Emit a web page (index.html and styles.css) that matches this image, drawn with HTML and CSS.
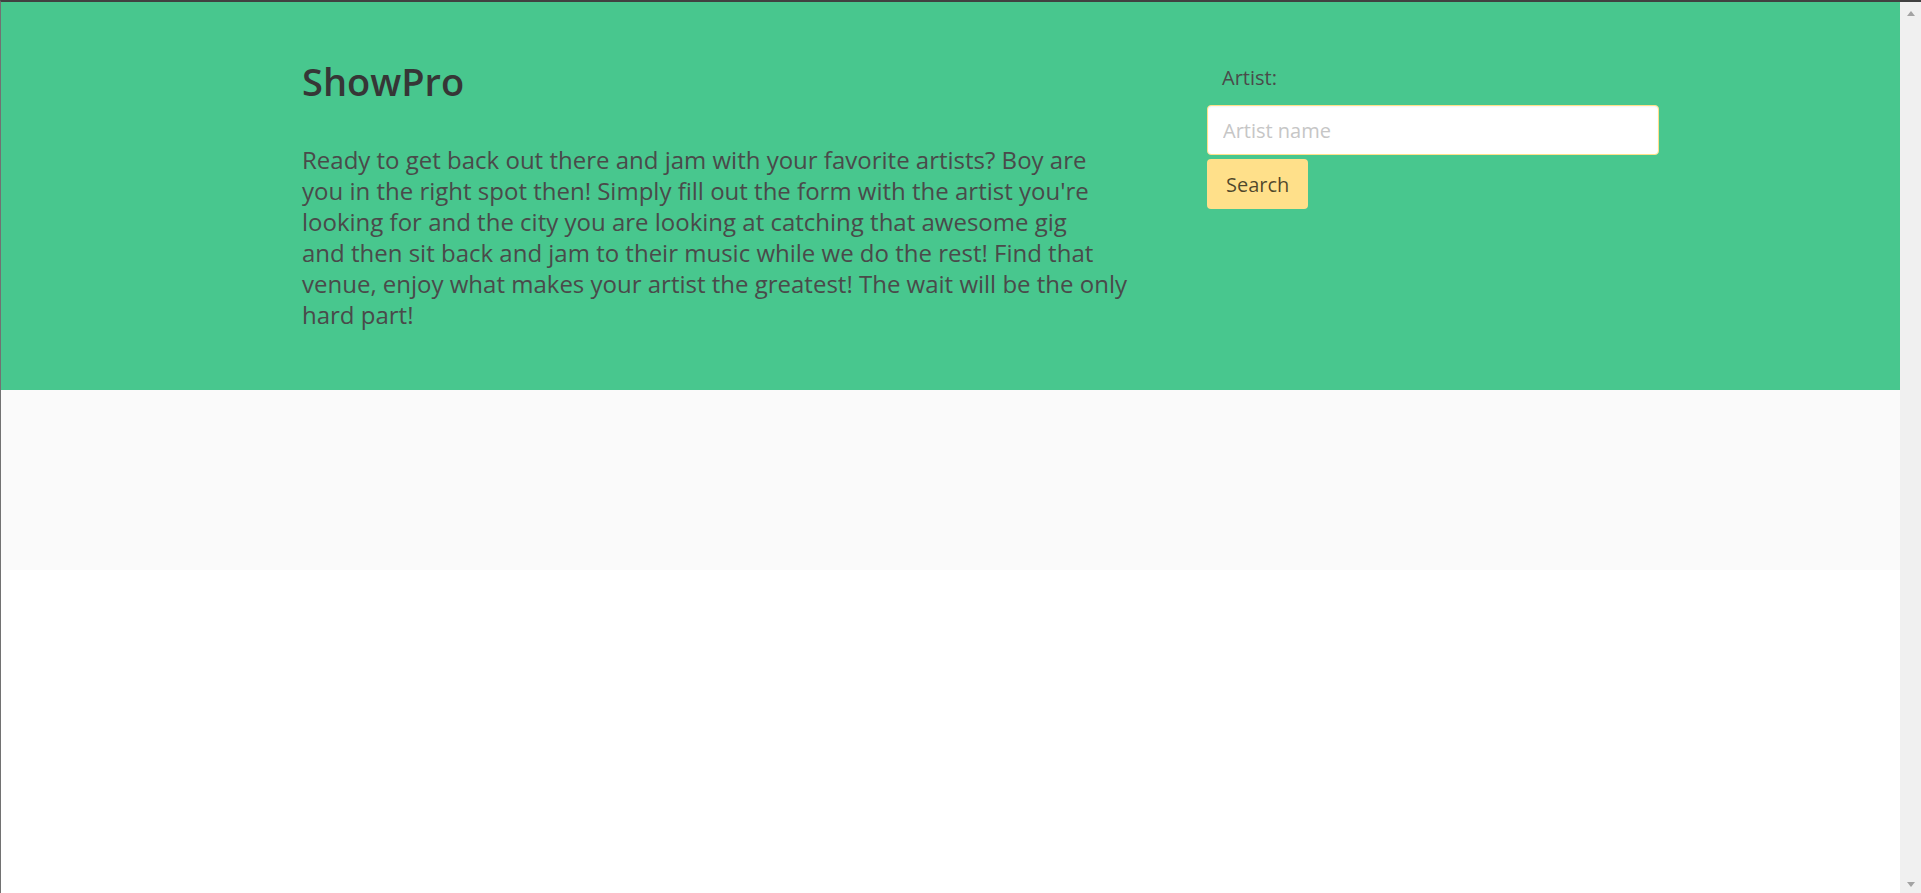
FILE: index.html
```html
<!DOCTYPE html>
<html lang="en">
<head>
<meta charset="utf-8">
<title>ShowPro</title>
<link rel="stylesheet" href="styles.css">
</head>
<body>
<div class="window">
  <main class="page">
    <section class="hero">
      <div class="hero-inner">
        <div class="intro">
          <h1 class="title">ShowPro</h1>
          <p class="lead">Ready to get back out there and jam with your favorite artists? Boy are<br>
you in the right spot then! Simply fill out the form with the artist you're<br>
looking for and the city you are looking at catching that awesome gig<br>
and then sit back and jam to their music while we do the rest! Find that<br>
venue, enjoy what makes your artist the greatest! The wait will be the only<br>
hard part!</p>
        </div>
        <form class="search">
          <label class="label" for="artist">Artist:</label>
          <input class="input" id="artist" type="text" placeholder="Artist name">
          <button class="button" type="button">Search</button>
        </form>
      </div>
    </section>
    <footer class="results"></footer>
  </main>
  <div class="scrollbar">
    <span class="arrow arrow-up"></span>
    <span class="arrow arrow-down"></span>
  </div>
</div>
</body>
</html>
```

FILE: styles.css
```css
* { box-sizing: border-box; }

html, body {
  margin: 0;
  padding: 0;
  height: 100%;
  overflow: hidden;
  background: #ffffff;
}

body {
  font-family: "Open Sans", "Noto Sans", sans-serif;
  color: #4a4a4a;
}

.window {
  display: flex;
  height: 893px;
  border-top: 2px solid #414141;
  border-left: 1px solid #727272;
}

.page {
  flex: 1;
  display: flex;
  flex-direction: column;
  background: #ffffff;
}

.hero {
  background: #48c78e;
  height: 388px;
  padding-top: 58px;
}

.hero-inner {
  display: flex;
  justify-content: space-between;
  padding: 0 241px 0 301px;
}

.intro {
  width: 860px;
}

.title {
  margin: 0;
  font-size: 38px;
  font-weight: 600;
  line-height: 43px;
  color: #363636;
}

.lead {
  margin: 41px 0 0;
  font-size: 24px;
  line-height: 31px;
  color: #4a4a4a;
}

.search {
  width: 452px;
  display: flex;
  flex-direction: column;
  align-items: flex-start;
}

.label {
  font-size: 20px;
  line-height: 30px;
  padding-left: 15px;
  margin-top: 3px;
  margin-bottom: 12px;
  color: #4a4a4a;
}

.input {
  width: 100%;
  height: 50px;
  font: inherit;
  font-size: 20px;
  padding: 0 15px;
  background: #ffffff;
  border: 1px solid #ffe08a;
  border-radius: 4px;
  box-shadow: inset 0 1px 2px rgba(10, 10, 10, 0.05);
  color: #363636;
  outline: none;
}

.input::placeholder {
  color: #c6c6c6;
}

.button {
  margin-top: 4px;
  height: 50px;
  padding: 0 18px;
  font: inherit;
  font-size: 20px;
  background: #ffe08a;
  color: rgba(0, 0, 0, 0.7);
  border: 1px solid transparent;
  border-radius: 4px;
  cursor: pointer;
}

.results {
  background: #fafafa;
  height: 180px;
}

.scrollbar {
  width: 21px;
  background: #f0f0f0;
  display: flex;
  flex-direction: column;
  justify-content: space-between;
  align-items: center;
  padding: 9px 0 6px;
}

.arrow {
  width: 0;
  height: 0;
  border-left: 4.5px solid transparent;
  border-right: 4.5px solid transparent;
}

.arrow-up {
  border-bottom: 5px solid #a3a3a3;
}

.arrow-down {
  border-top: 5px solid #a3a3a3;
}
```
